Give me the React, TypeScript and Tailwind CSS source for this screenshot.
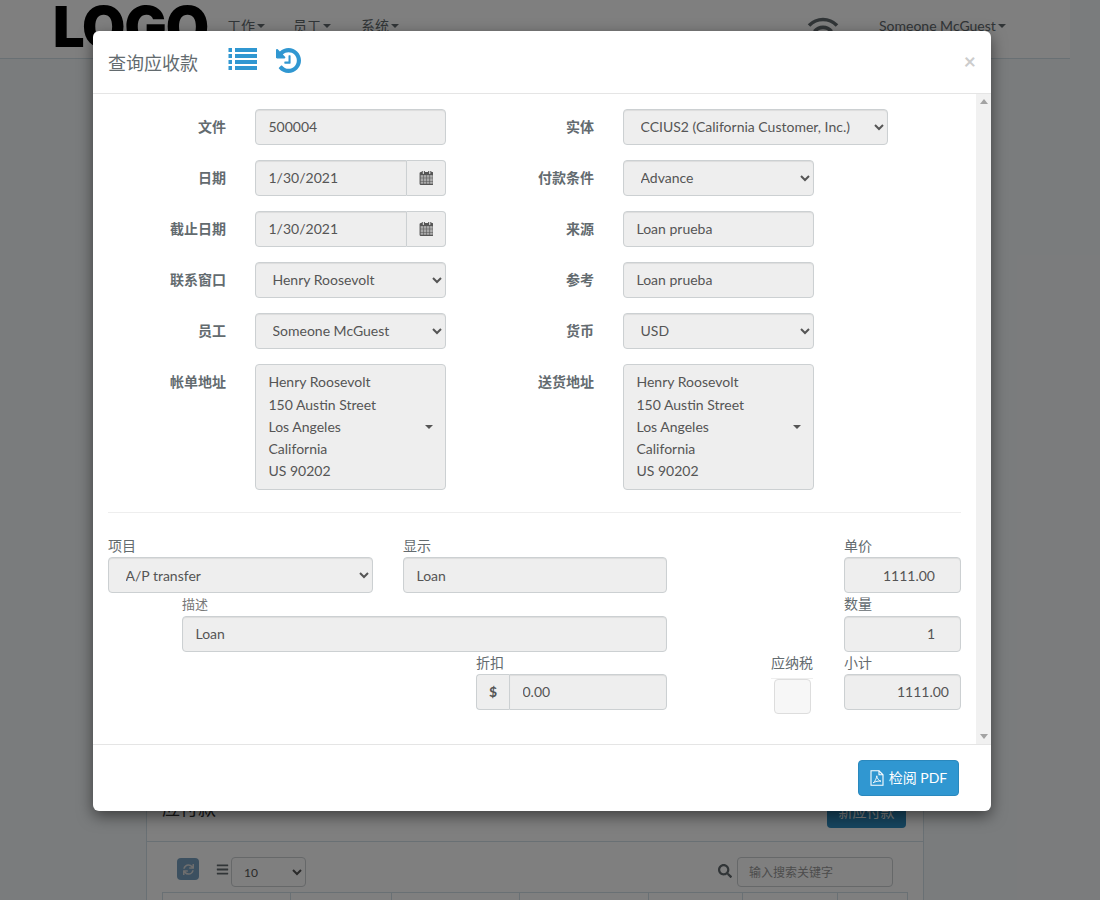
import { FaSearch, FaSync, FaBars } from "react-icons/fa";

const font = { fontFamily: '"Lato", "Noto Sans CJK SC", sans-serif' };

const fieldBase =
  "h-9 rounded border border-[#ccd0d2] bg-[#eeeeee] text-sm text-[#555555] shadow-[inset_0_1px_1px_rgba(0,0,0,0.075)] outline-none";
const inputCls = `${fieldBase} px-[12.5px] pb-[2px]`;
const selectCls = `${fieldBase} pl-[12.5px] pr-3 pb-[2px]`;
// bottom item rows sit 1px lower than the form rows above
const itemInput = `${fieldBase} px-[12.5px]`;
const fieldLabel = "pb-[2px] text-sm leading-[18px]";

function IconList() {
  return (
    <svg width="29" height="23" viewBox="0 0 29 23" fill="#3097d1" className="ml-[30px] mt-[16px]">
      <rect x="0.5" y="1" width="3.5" height="4" />
      <rect x="0.5" y="7" width="3.5" height="4" />
      <rect x="0.5" y="13" width="3.5" height="4" />
      <rect x="0.5" y="19" width="3.5" height="4" />
      <rect x="7" y="1" width="22" height="4" />
      <rect x="7" y="7" width="22" height="4" />
      <rect x="7" y="13" width="22" height="4" />
      <rect x="7" y="19" width="22" height="4" />
    </svg>
  );
}

function IconHistory() {
  return (
    <svg width="25" height="25" viewBox="0 -128 1536 1536" fill="#3097d1" className="ml-[19px] mt-[17px]">
      <path d="M1536 640q0 156-61 298t-164 245-245 164-298 61q-172 0-327-72.5t-264-204.5q-7-10-6.5-22.5t8.5-20.5l137-138q10-9 25-9 16 2 23 12 73 95 179 147t225 52q104 0 198.5-40.5t163.5-109.5 109.5-163.5 40.5-198.5-40.5-198.5-109.5-163.5-163.5-109.5-198.5-40.5q-98 0-188 35.5t-160 101.5l137 138q31 30 14 69-17 40-59 40h-448q-26 0-45-19t-19-45v-448q0-42 40-59 39-17 69 14l130 129q107-101 244.5-156.5t284.5-55.5q156 0 298 61t245 164 164 245 61 298zm-640-288v448q0 14-9 23t-23 9h-320q-14 0-23-9t-9-23v-64q0-14 9-23t23-9h224v-352q0-14 9-23t23-9h64q14 0 23 9t9 23z" />
    </svg>
  );
}

function IconCalendar() {
  return (
    <svg width="14" height="15" viewBox="0 128 1664 1792" fill="#555555">
      <rect x="128" y="640" width="1408" height="1152" opacity="0.45" />
      <path d="M192 1664h288v-288h-288v288zm352 0h320v-288h-320v288zm-352-352h288v-320h-288v320zm352 0h320v-320h-320v320zm-352-384h288v-288h-288v288zm736 736h320v-288h-320v288zm-384-736h320v-288h-320v288zm768 736h288v-288h-288v288zm-384-352h320v-320h-320v320zm-352-864v-288q0-13-9.5-22.5t-22.5-9.5h-64q-13 0-22.5 9.5t-9.5 22.5v288q0 13 9.5 22.5t22.5 9.5h64q13 0 22.5-9.5t9.5-22.5zm736 864h288v-320h-288v320zm-384-384h320v-288h-320v288zm384 0h288v-288h-288v288zm32-480v-288q0-13-9.5-22.5t-22.5-9.5h-64q-13 0-22.5 9.5t-9.5 22.5v288q0 13 9.5 22.5t22.5 9.5h64q13 0 22.5-9.5t9.5-22.5zm384-64v1280q0 52-38 90t-90 38h-1408q-52 0-90-38t-38-90v-1280q0-52 38-90t90-38h128v-96q0-66 47-113t113-47h64q66 0 113 47t47 113v96h384v-96q0-66 47-113t113-47h64q66 0 113 47t47 113v96h128q52 0 90 38t38 90z" />
    </svg>
  );
}

function IconPdf() {
  return (
    <svg width="14" height="16" viewBox="0 0 14 16" fill="none" stroke="white" strokeWidth="1.1">
      <path d="M1 0.8H9L13 4.8V15.2H1Z" />
      <path d="M9 0.8V4.8H13" />
      <path d="M3.2 12.8C5 11.5 6.5 8.5 6.8 5.8C7.2 8.5 8.5 10.5 11 11.2C8.5 10.8 5.5 11.4 3.2 12.8Z" strokeWidth="0.9" />
    </svg>
  );
}

function IconWifi() {
  return (
    <svg width="32" height="20" viewBox="0 0 32 20" fill="none" stroke="#636b6f" strokeWidth="3.6" className="ml-[408px] mt-[16px]">
      <path d="M2 9.5C10 1.5 22 1.5 30 9.5" />
      <path d="M7.5 15.5C12 10 20 10 24.5 15.5" />
    </svg>
  );
}

function Label({ children }: { children: React.ReactNode }) {
  return <div className="text-right text-sm font-bold leading-9 text-[#636b6f]">{children}</div>;
}

function DateInput({ value }: { value: string }) {
  return (
    <div className="flex h-9 w-[191px]">
      <input readOnly value={value} className={`${inputCls} w-[152px] rounded-r-none`} />
      <div className="flex w-[39px] items-center justify-center rounded-r border border-l-0 border-[#ccd0d2] bg-[#eeeeee]">
        <IconCalendar />
      </div>
    </div>
  );
}

function Sel({ value, w }: { value: string; w: string }) {
  return (
    <select defaultValue={value} className={`${selectCls} ${w}`}>
      <option>{value}</option>
    </select>
  );
}

function Address() {
  return (
    <div className="flex h-[126px] w-[191px] items-center justify-between rounded border border-[#ccd0d2] bg-[#eeeeee] py-[7px] pl-[12.5px] pr-3 text-sm leading-[22.3px] text-[#555555]">
      <div>
        <div>Henry Roosevolt</div>
        <div>150 Austin Street</div>
        <div>Los Angeles</div>
        <div>California</div>
        <div>US 90202</div>
      </div>
      <div className="h-0 w-0 border-x-[4px] border-t-[4px] border-x-transparent border-t-[#555555]" />
    </div>
  );
}

function NavItem({ label, cls }: { label: string; cls: string }) {
  return (
    <div className={`flex items-center gap-[2px] text-sm text-[#636b6f] ${cls}`}>
      {label}
      <span className="h-0 w-0 border-x-[4px] border-t-[4px] border-x-transparent border-t-[#636b6f]" />
    </div>
  );
}

function Background() {
  return (
    <div>
      <div className="flex h-[59px] w-[1070px] items-start border-b border-[#d3e0e9] bg-white">
        <div
          className="ml-[53px] mt-[-7px] w-[174px] text-[56px] font-black leading-[68px] tracking-[-1px] text-black"
          style={{ fontFamily: '"Inter", sans-serif' }}
        >
          LOGO
        </div>
        <NavItem label="工作" cls="mt-[16px]" />
        <NavItem label="员工" cls="ml-[28px] mt-[16px]" />
        <NavItem label="系统" cls="ml-[30px] mt-[16px]" />
        <IconWifi />
        <NavItem label="Someone McGuest" cls="ml-[40px] mt-[16px]" />
      </div>
      <div className="ml-[146px] mt-[701px] w-[778px] border border-[#d3e0e9] bg-white">
        <div className="flex h-[81px] items-end justify-between border-b border-[#d3e0e9] px-[15px] pb-[13px]">
          <div className="mb-[6px] text-lg text-[#333333]">应付款</div>
          <div className="mr-[2px] flex h-[32px] w-[79px] items-center justify-center rounded bg-[#2c8abf] text-sm text-white">
            新应付款
          </div>
        </div>
        <div className="flex h-[50px] items-start px-[15px] pt-[15px]">
          <div className="ml-[15px] mt-px flex h-[22px] w-[22px] items-center justify-center rounded bg-[#78a0c0] text-[#dddddd]">
            <FaSync size={11} />
          </div>
          <FaBars size={13} className="ml-[17px] mt-[6px] text-[#636b6f]" />
          <select defaultValue="10" className="ml-[2px] h-[30px] w-[75px] rounded border border-[#ccd0d2] bg-white px-2 text-xs text-[#555555]">
            <option>10</option>
          </select>
          <FaSearch size={14} className="ml-[412px] mt-[7px] text-[#636b6f]" />
          <input
            readOnly
            placeholder="输入搜索关键字"
            className="ml-[5px] h-[30px] w-[156px] rounded border border-[#ccd0d2] bg-white px-[11px] text-xs placeholder:text-[#999999]"
          />
        </div>
        <div className="mx-[15px] flex h-[30px] border border-[#d3e0e9]">
          <div className="w-[127px]" />
          <div className="w-[101px] border-l border-[#d3e0e9]" />
          <div className="w-[128px] border-l border-[#d3e0e9]" />
          <div className="w-[129px] border-l border-[#d3e0e9]" />
          <div className="w-[94px] border-l border-[#d3e0e9]" />
          <div className="w-[95px] border-l border-[#d3e0e9]" />
          <div className="flex-1 border-l border-[#d3e0e9]" />
        </div>
      </div>
    </div>
  );
}

export default function App() {
  return (
    <div className="relative h-[900px] w-[1100px] overflow-hidden bg-[#f5f8fa]" style={font}>
      <Background />

      {/* backdrop + modal */}
      <div className="absolute inset-0 bg-black/50">
        <div className="ml-[93px] mt-[31px] flex h-[780px] w-[898px] flex-col rounded-md bg-white text-[#636b6f] shadow-[0_5px_15px_rgba(0,0,0,0.5)]">
          <div className="flex h-[63px] shrink-0 items-start border-b border-[#e5e5e5] pl-[15px] pr-[15px]">
            <h4 className="mt-[20px] text-lg leading-[25px] text-[#636b6f]">查询应收款</h4>
            <IconList />
            <IconHistory />
            <div className="ml-auto mt-[17px] text-[21px] font-bold leading-[26px] text-[#cccccc]">×</div>
          </div>

          <div className="flex min-h-0 flex-1">
            <div className="min-w-0 flex-1 px-[15px] pt-[15px]">
              <div className="grid grid-cols-[118px_191px_119px_auto] items-start gap-x-[29px] gap-y-[15px]">
                <Label>文件</Label>
                <input readOnly value="500004" className={`${inputCls} w-[191px]`} />
                <Label>实体</Label>
                <Sel value="CCIUS2 (California Customer, Inc.)" w="w-[265px]" />

                <Label>日期</Label>
                <DateInput value="1/30/2021" />
                <Label>付款条件</Label>
                <Sel value="Advance" w="w-[191px]" />

                <Label>截止日期</Label>
                <DateInput value="1/30/2021" />
                <Label>来源</Label>
                <input readOnly value="Loan prueba" className={`${inputCls} w-[191px]`} />

                <Label>联系窗口</Label>
                <Sel value="Henry Roosevolt" w="w-[191px]" />
                <Label>参考</Label>
                <input readOnly value="Loan prueba" className={`${inputCls} w-[191px]`} />

                <Label>员工</Label>
                <Sel value="Someone McGuest" w="w-[191px]" />
                <Label>货币</Label>
                <Sel value="USD" w="w-[191px]" />

                <Label>帐单地址</Label>
                <Address />
                <Label>送货地址</Label>
                <Address />
              </div>

              <hr className="mt-[22px] border-[#eeeeee]" />

              <div className="mt-[24px] flex items-end">
                <div>
                  <div className={fieldLabel}>项目</div>
                  <select defaultValue="A/P transfer" className={`${fieldBase} block w-[265px] pl-[12.5px] pr-3`}>
                    <option>A/P transfer</option>
                  </select>
                </div>
                <div className="ml-[30px]">
                  <div className={fieldLabel}>显示</div>
                  <input readOnly value="Loan" className={`${itemInput} block w-[264px]`} />
                </div>
                <div className="ml-auto">
                  <div className={fieldLabel}>单价</div>
                  <input readOnly value="1111.00" className={`${itemInput} block w-[117px] pr-[25px] text-right`} />
                </div>
              </div>

              <div className="mt-[2.5px] flex items-end">
                <div className="ml-[74px]">
                  <div className="pb-1 text-[13px] leading-4 text-[#777777]">描述</div>
                  <input readOnly value="Loan" className={`${itemInput} block w-[485px]`} />
                </div>
                <div className="ml-auto">
                  <div className="pb-1 text-sm leading-4">数量</div>
                  <input readOnly value="1" className={`${itemInput} block w-[117px] pr-[25px] text-right`} />
                </div>
              </div>

              <div className="mt-[2px] flex items-end">
                <div className="ml-[368px]">
                  <div className={fieldLabel}>折扣</div>
                  <div className="flex h-9 w-[191px]">
                    <div className="flex w-[33px] items-center justify-center rounded-l border border-r-0 border-[#ccd0d2] bg-[#eeeeee] text-sm font-bold text-[#555555]">
                      $
                    </div>
                    <input readOnly value="0.00" className={`${itemInput} w-[158px] rounded-l-none`} />
                  </div>
                </div>
                <div className="ml-[104px] mb-[-4px] mt-[-6px] w-[42px]">
                  <div className="pb-[5px] text-sm leading-5">应纳税</div>
                  <div className="h-9 border-t border-[#eeeeee] pl-[3px]">
                    <div className="h-[35px] w-[37px] rounded border border-[#dddddd] bg-[#f7f7f7]" />
                  </div>
                </div>
                <div className="ml-auto">
                  <div className={fieldLabel}>小计</div>
                  <input readOnly value="1111.00" className={`${itemInput} block w-[117px] pr-[11px] text-right`} />
                </div>
              </div>
            </div>

            {/* scrollbar */}
            <div className="flex w-[15px] shrink-0 flex-col items-center justify-between bg-[#f1f1f1] py-[5px]">
              <div className="h-0 w-0 border-x-[4px] border-b-[5px] border-x-transparent border-b-[#a3a3a3]" />
              <div className="h-0 w-0 border-x-[4px] border-t-[5px] border-x-transparent border-t-[#a3a3a3]" />
            </div>
          </div>

          <div className="flex h-[67px] shrink-0 items-start justify-end border-t border-[#e5e5e5] pr-[32px] pt-[15px]">
            <button className="flex h-9 w-[101px] items-center justify-center gap-[5px] rounded border border-[#2a88bd] bg-[#3097d1] text-sm text-white">
              <IconPdf />
              检阅 PDF
            </button>
          </div>
        </div>
      </div>
    </div>
  );
}
